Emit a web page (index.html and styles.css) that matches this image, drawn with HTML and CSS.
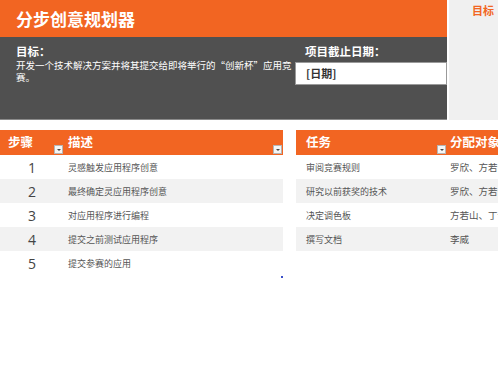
FILE: index.html
```html
<html><head>
<meta charset="UTF-8">
<meta name="viewport" content="width=device-width, initial-scale=1.0">
<title>分步创意规划器</title>
<link rel="stylesheet" href="styles.css">
</head>
<body>
  <div class="sheet">
    <div class="top">
      <div class="main">
        <div class="title-bar">
          <h1>分步创意规划器</h1>
        </div>
        <div class="info">
          <div class="goal">
            <h2>目标：</h2>
            <p>开发一个技术解决方案并将其提交给即将举行的“创新杯”应用竞赛。</p>
          </div>
          <div class="deadline">
            <h2>项目截止日期：</h2>
            <div class="date-box">[日期]</div>
          </div>
        </div>
      </div>
      <div class="side">
        <h3>目标</h3>
      </div>
    </div>

    <div class="tables">
      <div class="table steps">
        <div class="row head">
          <div class="cell num-col"><span>步骤</span><i class="drop"></i></div>
          <div class="cell desc-col"><span>描述</span><i class="drop"></i></div>
        </div>
        <div class="row"><div class="cell num-col num">1</div><div class="cell desc-col">灵感触发应用程序创意</div></div>
        <div class="row alt"><div class="cell num-col num">2</div><div class="cell desc-col">最终确定灵应用程序创意</div></div>
        <div class="row"><div class="cell num-col num">3</div><div class="cell desc-col">对应用程序进行编程</div></div>
        <div class="row alt"><div class="cell num-col num">4</div><div class="cell desc-col">提交之前测试应用程序</div></div>
        <div class="row"><div class="cell num-col num">5</div><div class="cell desc-col">提交参赛的应用</div></div>
        <i class="handle"></i>
      </div>

      <div class="table tasks">
        <div class="row head">
          <div class="cell task-col"><span>任务</span><i class="drop"></i></div>
          <div class="cell who-col"><span>分配对象</span></div>
        </div>
        <div class="row"><div class="cell task-col">审阅竞赛规则</div><div class="cell who-col">罗欣、方若山</div></div>
        <div class="row alt"><div class="cell task-col">研究以前获奖的技术</div><div class="cell who-col">罗欣、方若山</div></div>
        <div class="row"><div class="cell task-col">决定调色板</div><div class="cell who-col">方若山、丁语</div></div>
        <div class="row alt"><div class="cell task-col">撰写文档</div><div class="cell who-col">李威</div></div>
      </div>
    </div>
  </div>
</body>
</html>
```

FILE: styles.css
```css
body {
  margin: 0;
  background-color: #ffffff;
  font-family: "Noto Sans CJK SC", "Noto Sans", sans-serif;
  overflow: hidden;
}
.sheet {
  width: 498px;
  height: 382px;
  overflow: hidden;
}
.top {
  display: flex;
  height: 120px;
}
.main {
  width: 447px;
  flex: none;
  display: flex;
  flex-direction: column;
}
.title-bar {
  height: 37px;
  background-color: #f26522;
  padding-left: 16px;
  display: flex;
  align-items: center;
}
h1 {
  margin: 0;
  color: #ffffff;
  font-size: 17px;
  font-weight: bold;
  line-height: 20px;
}
.info {
  flex: 1;
  background-color: #505050;
  border-bottom: 1px solid #8a8a8a;
  display: flex;
  padding-top: 7px;
}
.info h2 {
  margin: 0;
  color: #ffffff;
  font-size: 11.5px;
  font-weight: bold;
  line-height: 14px;
}
.goal {
  width: 278px;
  padding-left: 16px;
}
.goal p {
  margin: 1px 0 0;
  color: #ffffff;
  font-size: 9.5px;
  line-height: 12px;
}
.deadline {
  margin-left: 1px;
  width: 152px;
}
.deadline h2 {
  padding-left: 10px;
}
.date-box {
  margin-top: 4px;
  height: 23px;
  background-color: #ffffff;
  border: 1px solid #9a9a9a;
  box-sizing: border-box;
  padding-left: 10px;
  font-size: 11px;
  line-height: 21px;
  color: #333333;
  font-weight: bold;
}
.side {
  flex: 1;
  margin-left: 2px;
  background-color: #f0f0f0;
  padding-left: 23px;
}
.side h3 {
  margin: 3px 0 0;
  color: #f26522;
  font-size: 11px;
  font-weight: bold;
  line-height: 14px;
  white-space: nowrap;
}
.tables {
  display: flex;
  margin-top: 10px;
  gap: 13px;
}
.table {
  position: relative;
}
.steps {
  width: 283px;
  flex: none;
}
.tasks {
  flex: 1;
}
.row {
  display: flex;
  height: 24px;
  align-items: center;
  font-size: 9px;
  color: #555555;
}
.row.alt {
  background-color: #f2f2f2;
}
.row.head {
  height: 25px;
  background-color: #f26522;
  align-items: stretch;
}
.head .cell {
  display: flex;
  justify-content: space-between;
  color: #ffffff;
  font-size: 12.5px;
  font-weight: bold;
  line-height: 14px;
}
.head .cell span {
  padding-top: 5px;
}
.cell {
  box-sizing: border-box;
  white-space: nowrap;
}
.num-col {
  width: 64px;
  flex: none;
  padding-left: 4px;
}
.head .num-col {
  padding-left: 8px;
}
.desc-col {
  flex: 1;
  padding-left: 4px;
}
.num {
  text-align: center;
  font-family: "Open Sans", "Noto Sans", sans-serif;
  font-size: 14px;
  color: #444444;
  padding-left: 0;
}
.task-col {
  width: 151px;
  flex: none;
  padding-left: 10px;
}
.who-col {
  flex: 1;
  padding-left: 3px;
  font-size: 9.5px;
}
.head .who-col {
  font-size: 12.5px;
  padding-left: 3px;
}
.drop {
  align-self: flex-end;
  width: 9px;
  height: 9px;
  margin: 0 1px 1px 0;
  background-color: #f5f5f5;
  border: 1px solid #b5b5b5;
  box-sizing: border-box;
  position: relative;
}
.drop::after {
  content: "";
  position: absolute;
  left: 2px;
  top: 3px;
  border-left: 2px solid transparent;
  border-right: 2px solid transparent;
  border-top: 2px solid #444444;
}
.handle {
  position: absolute;
  right: 0;
  bottom: -3px;
  width: 2px;
  height: 2px;
  background-color: #3a4fc8;
}
```
